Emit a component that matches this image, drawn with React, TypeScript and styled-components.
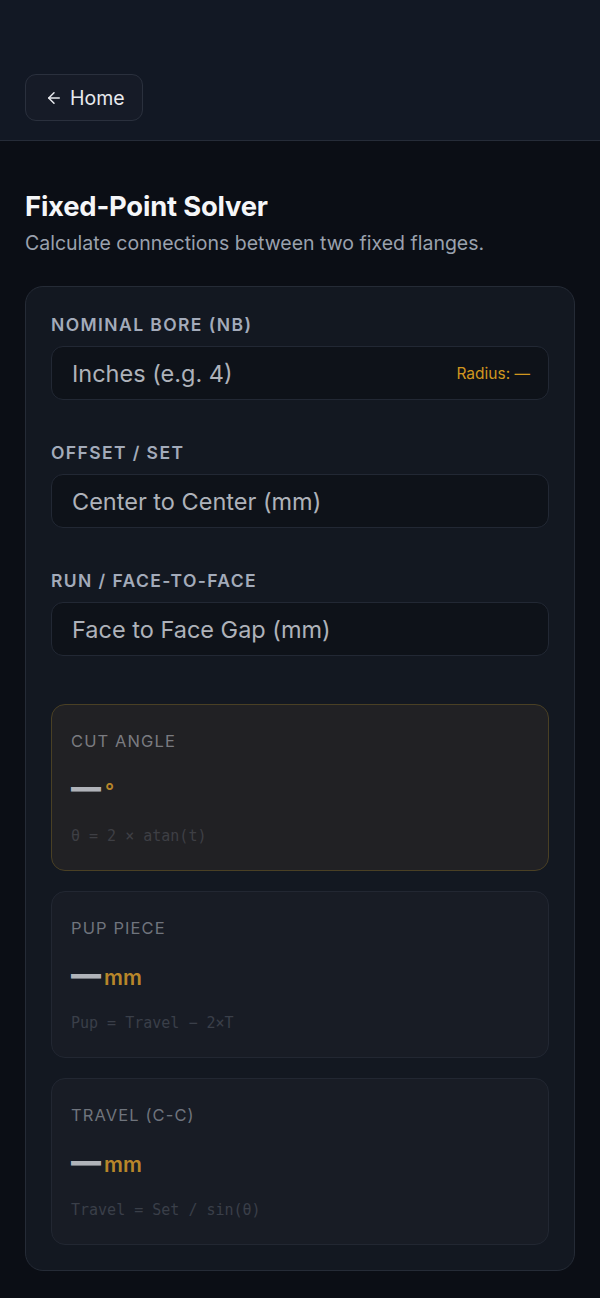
import React from "react";
import styled, { createGlobalStyle } from "styled-components";

const Global = createGlobalStyle`
  html, body { margin: 0; padding: 0; background: #0b0e15; }
  body { font-family: Inter, "Noto Sans", sans-serif; -webkit-font-smoothing: antialiased; }
  * { box-sizing: border-box; }
`;

const Page = styled.div`
  min-height: 1298px;
  background: #0b0e15;
`;

const Header = styled.header`
  background: #121824;
  border-bottom: 1px solid #262c38;
  padding: 74px 25px 19px;
`;

const HomeButton = styled.button`
  display: inline-flex;
  align-items: center;
  gap: 7px;
  height: 47px;
  width: 118px;
  padding: 0 0 0 19px;
  border-radius: 11px;
  background: #161b27;
  border: 1px solid #2a303d;
  color: #e8eaee;
  font-family: Inter, sans-serif;
  font-size: 19.5px;
  font-weight: 400;
`;

const Main = styled.main`
  padding: 0 25px;
`;

const TitleWrap = styled.div`
  padding-top: 49px;
`;

const Title = styled.h1`
  margin: 0;
  font-size: 27.4px;
  font-weight: 700;
  color: #f5f6f8;
  line-height: 32px;
  letter-spacing: -0.2px;
`;

const Subtitle = styled.p`
  margin: 9px 0 0;
  font-size: 19.5px;
  line-height: 24px;
  color: #9aa1ad;
`;

const Card = styled.section`
  margin-top: 31px;
  background: #131821;
  border: 1px solid #252b36;
  border-radius: 18px;
  padding: 26px 25px 25px;
  display: flex;
  flex-direction: column;
`;

const Field = styled.div`
  display: flex;
  flex-direction: column;
  gap: 9px;
  & + & {
    margin-top: 41px;
  }
`;

const Label = styled.label`
  font-size: 17.5px;
  line-height: 24px;
  font-weight: 600;
  letter-spacing: 1.4px;
  color: #a3abba;
  text-transform: uppercase;
`;

const InputBox = styled.div`
  height: 54px;
  background: #0e1219;
  border: 1px solid #222834;
  border-radius: 12px;
  display: flex;
  align-items: center;
  padding: 0 18px 0 20px;
`;

const Placeholder = styled.span`
  flex: 1;
  font-size: 23.5px;
  color: #aeb2ba;
`;

const Hint = styled.span`
  font-size: 15.5px;
  color: #d0961f;
`;

const Results = styled.div`
  margin-top: 48px;
  display: flex;
  flex-direction: column;
  gap: 20px;
`;

const ResultCard = styled.div<{ $accent?: boolean }>`
  background: ${(p) => (p.$accent ? "#212124" : "#181c25")};
  border: 1px solid ${(p) => (p.$accent ? "#4a4024" : "#222732")};
  border-radius: 14px;
  padding: 24px 19px 24px;
  display: flex;
  flex-direction: column;
`;

const ResultLabel = styled.div<{ $accent?: boolean }>`
  font-size: 16.5px;
  line-height: 24px;
  letter-spacing: 1.1px;
  color: ${(p) => (p.$accent ? "#7a7b80" : "#6f747d")};
`;

const Value = styled.div`
  margin-top: 16px;
  height: 36px;
  display: flex;
  align-items: baseline;
  line-height: 36px;
`;

const Dash = styled.span`
  font-size: 30px;
  font-weight: 900;
  color: #b0b3b9;
`;

const Unit = styled.span`
  font-size: 21px;
  font-weight: 600;
  color: #b8862a;
  margin-left: 3px;
`;

const Degree = styled.span`
  font-size: 20px;
  font-weight: 600;
  color: #b8862a;
  margin-left: 4px;
`;

const Formula = styled.div<{ $accent?: boolean }>`
  margin-top: 21px;
  font-family: "DejaVu Sans Mono", monospace;
  font-size: 15px;
  line-height: 20px;
  color: ${(p) => (p.$accent ? "#3e3f44" : "#3a3f49")};
`;

const ArrowIcon = () => (
  <svg width="18" height="18" viewBox="0 0 24 24" fill="none" stroke="currentColor" strokeWidth="2" strokeLinecap="round" strokeLinejoin="round">
    <path d="M19 12H5" />
    <path d="M12 19l-7-7 7-7" />
  </svg>
);

const fields = [
  { label: "Nominal Bore (NB)", placeholder: "Inches (e.g. 4)", hint: "Radius: —" },
  { label: "Offset / Set", placeholder: "Center to Center (mm)" },
  { label: "Run / Face-to-Face", placeholder: "Face to Face Gap (mm)" },
];

const results = [
  { label: "CUT ANGLE", unit: "°", formula: "θ = 2 × atan(t)", accent: true },
  { label: "PUP PIECE", unit: "mm", formula: "Pup = Travel − 2×T" },
  { label: "TRAVEL (C-C)", unit: "mm", formula: "Travel = Set / sin(θ)" },
];

export default function App() {
  return (
    <Page>
      <Global />
      <Header>
        <HomeButton>
          <ArrowIcon />
          Home
        </HomeButton>
      </Header>
      <Main>
        <TitleWrap>
          <Title>Fixed-Point Solver</Title>
          <Subtitle>Calculate connections between two fixed flanges.</Subtitle>
        </TitleWrap>
        <Card>
          {fields.map((f) => (
            <Field key={f.label}>
              <Label>{f.label}</Label>
              <InputBox>
                <Placeholder>{f.placeholder}</Placeholder>
                {f.hint && <Hint>{f.hint}</Hint>}
              </InputBox>
            </Field>
          ))}
          <Results>
            {results.map((r) => (
              <ResultCard key={r.label} $accent={r.accent}>
                <ResultLabel $accent={r.accent}>{r.label}</ResultLabel>
                <Value>
                  <Dash>—</Dash>
                  {r.unit === "°" ? <Degree>°</Degree> : <Unit>{r.unit}</Unit>}
                </Value>
                <Formula $accent={r.accent}>{r.formula}</Formula>
              </ResultCard>
            ))}
          </Results>
        </Card>
      </Main>
    </Page>
  );
}
